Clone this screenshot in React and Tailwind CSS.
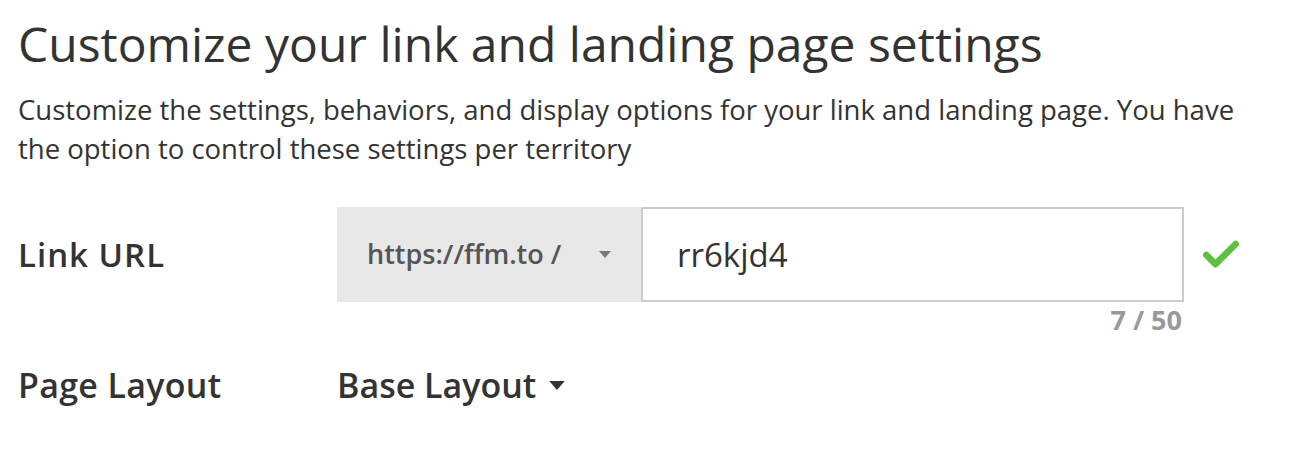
import { Check } from 'lucide-react';

const Caret = ({ className }) => (
  <svg viewBox="0 0 12 7" className={className} fill="currentColor">
    <path d="M0 0h12L6 7z" />
  </svg>
);

export default function App() {
  return (
    <div className="min-h-screen bg-white pl-[18px] pt-[12px] text-[#333] font-['Open_Sans','Lato',sans-serif]">
      <h1 className="text-[48px] leading-[64px] font-normal">Customize your link and landing page settings</h1>
      <p className="mt-[14px] text-[27.5px] leading-[39px] max-w-[1240px]">
        Customize the settings, behaviors, and display options for your link and landing page. You have the option to control these settings per territory
      </p>

      <div className="mt-[39px] flex items-start">
        <div className="w-[319px] h-[95px] flex items-center text-[33px] tracking-[1px] font-semibold">Link URL</div>
        <div className="flex flex-col items-end">
          <div className="flex h-[95px]">
            <div className="w-[304px] bg-[#e8e8e8] flex items-center pl-[30px] pr-[30px] justify-between text-[27px] font-semibold text-[#555]">
              <span>https://ffm.to /</span>
              <Caret className="w-[12px] h-[7px] text-[#777]" />
            </div>
            <div className="w-[543px] border-2 border-[#ccc] flex items-center pl-[34px] text-[33px]">rr6kjd4</div>
          </div>
          <div className="text-[27px] leading-[36px] font-bold text-[#999] pr-[2px]">7 / 50</div>
        </div>
        <div className="h-[95px] flex items-center ml-[15px]">
          <Check className="w-[44px] h-[44px] text-[#5cc13f]" strokeWidth={3.6} />
        </div>
      </div>

      <div className="mt-[22px] flex items-center h-[50px]">
        <div className="w-[319px] text-[34px] tracking-[0.3px] font-semibold">Page Layout</div>
        <div className="flex items-center gap-[13px] text-[34px] font-semibold">
          <span>Base Layout</span>
          <Caret className="w-[16px] h-[9px]" />
        </div>
      </div>
    </div>
  );
}
